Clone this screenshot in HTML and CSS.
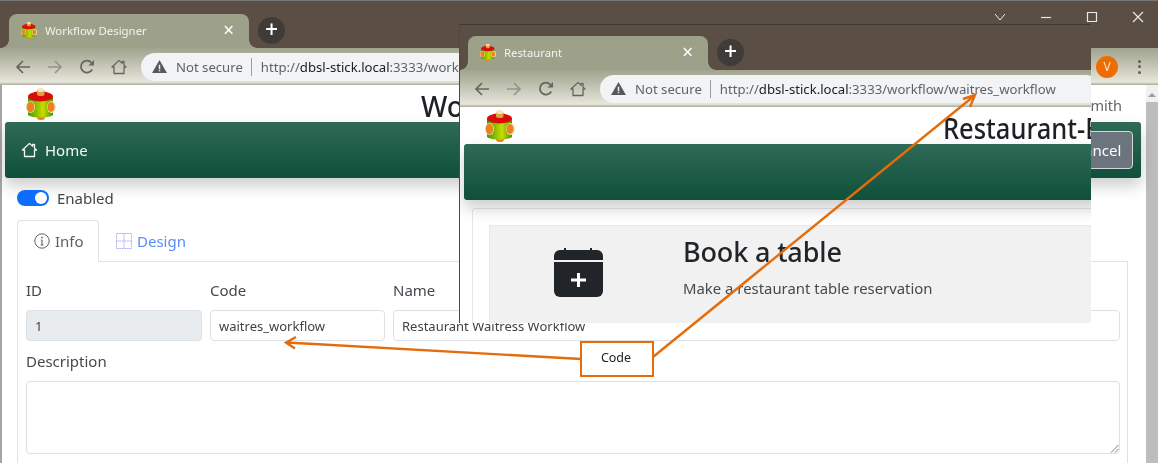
FILE: index.html
```html
<!DOCTYPE html>
<html lang="en">
<head>
<meta charset="utf-8">
<title>Workflow Designer</title>
<link rel="stylesheet" href="styles.css">
</head>
<body>
<svg class="defs" width="0" height="0" aria-hidden="true">
  <defs>
    <linearGradient id="bodyGrad" x1="0" x2="1" y1="0" y2="0">
      <stop offset="0" stop-color="#3f9a00"/><stop offset=".6" stop-color="#c8dc00"/><stop offset="1" stop-color="#4a9400"/>
    </linearGradient>
    <symbol id="logo" viewBox="0 0 30 32">
      <ellipse cx="15" cy="29.500" rx="4" ry="2.500" fill="#e8841c"/>
      <path d="M2 9h25v18c-4 3.500-21 3.500-25 0z" fill="url(#bodyGrad)"/>
      <ellipse cx="4.500" cy="19" rx="4.500" ry="6" fill="#f3e4b8"/>
      <ellipse cx="4.500" cy="19" rx="3.800" ry="5.400" fill="#e8841c"/>
      <ellipse cx="25.500" cy="19" rx="4.500" ry="6" fill="#f3e4b8"/>
      <ellipse cx="25" cy="19" rx="3.500" ry="5" fill="#e8841c"/>
      <ellipse cx="14.500" cy="8.500" rx="12.500" ry="5" fill="#d80c08"/>
      <rect x="11" y="1" width="7.500" height="7" rx="2.500" fill="#e0a040"/>
      <ellipse cx="14.700" cy="2" rx="3.500" ry="2" fill="#f3e4b8"/>
    </symbol>
    <symbol id="house" viewBox="0 0 16 16">
      <path d="M8 1.400 1 8h2v6.500h10V8h2l-2-1.900V2.400h-1.800v2z" fill="none" stroke="currentColor" stroke-width="1.300" stroke-linejoin="round"/>
    </symbol>
    <symbol id="back" viewBox="0 0 16 16">
      <path d="M15 8H2M8 2 2 8l6 6" fill="none" stroke="currentColor" stroke-width="1.700"/>
    </symbol>
    <symbol id="forward" viewBox="0 0 16 16">
      <path d="M1 8h13M8 2l6 6-6 6" fill="none" stroke="currentColor" stroke-width="1.700"/>
    </symbol>
    <symbol id="reload" viewBox="0 0 16 16">
      <path d="M13.200 10.500A6 6 0 1 1 12.400 3.600" fill="none" stroke="currentColor" stroke-width="1.800"/>
      <path d="M9.500 6.500h5.500V1z" fill="currentColor"/>
    </symbol>
    <symbol id="warn" viewBox="0 0 16 14">
      <path d="M8 0 16 14H0z" fill="currentColor"/>
      <path d="M7.200 5h1.600v4.600H7.200zM7.200 10.600h1.600v1.600H7.200z" fill="#f1f3f4"/>
    </symbol>
  </defs>
</svg>

<main class="window window-back">
  <div class="tabstrip">
    <div class="tab">
      <svg class="favicon"><use href="#logo"/></svg>
      <span class="tab-title">Workflow Designer</span>
      <span class="tab-close">×</span>
    </div>
    <span class="newtab">+</span>
    <div class="winctl">
      <svg class="ctl" viewBox="0 0 12 12"><path d="M1 3l5 6 5-6" fill="none" stroke="currentColor"/></svg>
      <svg class="ctl" viewBox="0 0 12 12"><path d="M1 6.500h10" fill="none" stroke="currentColor" stroke-width="1.200"/></svg>
      <svg class="ctl" viewBox="0 0 12 12"><path d="M1.500 1.500h9v9h-9z" fill="none" stroke="currentColor" stroke-width="1.200"/></svg>
      <svg class="ctl" viewBox="0 0 12 12"><path d="M1 1l10 10M11 1 1 11" fill="none" stroke="currentColor" stroke-width="1.200"/></svg>
    </div>
  </div>
  <div class="toolbar">
    <svg class="nav"><use href="#back"/></svg>
    <svg class="nav nav-off"><use href="#forward"/></svg>
    <svg class="nav"><use href="#reload"/></svg>
    <svg class="nav"><use href="#house"/></svg>
    <div class="omnibox">
      <svg class="warn"><use href="#warn"/></svg>
      <span class="insecure">Not secure</span>
      <span class="url">http://<b>dbsl-stick.local</b>:3333/workflow/1</span>
    </div>
    <span class="avatar">V</span>
    <span class="kebab"><i></i><i></i><i></i></span>
  </div>
  <div class="page">
    <div class="page-main">
      <header class="brand">
        <svg class="logo"><use href="#logo"/></svg>
        <h1 class="brand-title">Workflow Designer</h1>
        <span class="user">John Smith</span>
      </header>
      <nav class="navbar">
        <a class="nav-home"><svg class="home-icon"><use href="#house"/></svg>Home</a>
        <span class="cancel">Cancel</span>
      </nav>
      <label class="switch-row"><span class="switch"></span>Enabled</label>
      <div class="tabs">
        <span class="tabitem active">
          <svg class="tabicon" viewBox="0 0 16 16"><circle cx="8" cy="8" r="7.200" fill="none" stroke="currentColor"/><path d="M8 7v5M6.600 12h2.800M6.800 7H8" fill="none" stroke="currentColor" stroke-width="1.100"/><circle cx="8" cy="4.600" r=".9" fill="currentColor"/></svg>Info
        </span>
        <span class="tabitem link">
          <svg class="tabicon" viewBox="0 0 16 16"><path d="M.5.5h15v15H.5zM8 .5v15M.5 8h15" fill="none" stroke="#aeb0f6" stroke-dasharray="2 .7"/></svg>Design
        </span>
      </div>
      <section class="panel">
        <div class="row">
          <div class="field f-id"><label>ID</label><div class="input disabled">1</div></div>
          <div class="field f-code"><label>Code</label><div class="input">waitres_workflow</div></div>
          <div class="field f-name"><label>Name</label><div class="input">Restaurant Waitress Workflow</div></div>
        </div>
        <div class="field">
          <label>Description</label>
          <div class="textarea">
            <svg class="grip" viewBox="0 0 10 10"><path d="M9.500 2 2 9.500M9.500 6 6 9.500" stroke="#777" fill="none"/></svg>
          </div>
        </div>
      </section>
    </div>
    <div class="scrollbar"><i></i><b></b></div>
  </div>
</main>

<section class="window window-front">
  <div class="tabstrip tabstrip-front">
    <div class="tab">
      <svg class="favicon"><use href="#logo"/></svg>
      <span class="tab-title tab-title-small">Restaurant</span>
      <span class="tab-close">×</span>
    </div>
    <span class="newtab">+</span>
  </div>
  <div class="toolbar toolbar-front">
    <svg class="nav"><use href="#back"/></svg>
    <svg class="nav nav-off"><use href="#forward"/></svg>
    <svg class="nav"><use href="#reload"/></svg>
    <svg class="nav"><use href="#house"/></svg>
    <div class="omnibox omnibox-front">
      <svg class="warn"><use href="#warn"/></svg>
      <span class="insecure">Not secure</span>
      <span class="url">http://<b>dbsl-stick.local</b>:3333/workflow/waitres_workflow</span>
    </div>
  </div>
  <div class="page-front">
    <header class="brand brand-front">
      <svg class="logo"><use href="#logo"/></svg>
      <h1 class="brand-title brand-title-front">Restaurant-Booking</h1>
    </header>
    <div class="navbar navbar-front"></div>
    <div class="card">
      <div class="hero">
        <svg class="calendar" viewBox="0 0 49 49">
          <path d="M10 0h2v2h24V0h2v2h5a6 6 0 0 1 6 6v4H0V8a6 6 0 0 1 6-6h4z" fill="#212529"/>
          <path d="M0 14h49v29a6 6 0 0 1-6 6H6a6 6 0 0 1-6-6z" fill="#212529"/>
          <path d="M24.500 25v14M17 32h15" stroke="#fff" stroke-width="3"/>
        </svg>
        <div class="hero-text">
          <h2>Book a table</h2>
          <p>Make a restaurant table reservation</p>
        </div>
      </div>
    </div>
  </div>
</section>

<svg class="arrows" viewBox="0 0 1158 463" width="1158" height="463" aria-hidden="true">
  <path d="M581 359 287 342.500M296 337 286 342.500l9 6" fill="none" stroke="#e46c0a" stroke-width="2.400"/>
  <path d="M653 357 974 96M963 99 975 95l-5 12" fill="none" stroke="#e46c0a" stroke-width="2.400"/>
</svg>
<div class="callout">Code</div>
</body>
</html>
```
FILE: styles.css
```css
* { box-sizing: border-box; }
html, body { margin: 0; padding: 0; }
body {
  width: 1158px; height: 463px; overflow: hidden; position: relative;
  background: #fff; color: #212529;
  font-family: "Noto Sans", "Open Sans", sans-serif; font-size: 15px;
  filter: blur(.45px);
}
.defs { position: absolute; }
.window { position: absolute; overflow: hidden; background: #fff; display: flex; flex-direction: column; }
.window-back { left: 0; top: 0; width: 1158px; height: 463px; border-top: 1px solid #777; }
.window-front { left: 459px; top: 24px; width: 632px; height: 299px; border-left: 1px solid #4a4a4a; border-top: 1px solid #3e3a36; }

.tabstrip { height: 47px; flex: none; background: #5a4e45; display: flex; align-items: flex-end; padding-left: 9px; position: relative; }
.tabstrip-front { height: 45px; padding-left: 8px; }
.tab { width: 240px; height: 34px; background: #9ea18a; border-radius: 8px 8px 0 0; display: flex; align-items: center; padding: 0 15px 2px 12px; color: #fff; position: relative; }
.tab::before, .tab::after { content: ""; position: absolute; bottom: 0; width: 8px; height: 8px; }
.tab::before { left: -8px; background: radial-gradient(circle at 0 0, transparent 7.5px, #9ea18a 8px); }
.tab::after { right: -8px; background: radial-gradient(circle at 100% 0, transparent 7.5px, #9ea18a 8px); }
.favicon { width: 16px; height: 17px; flex: none; margin-right: 8px; }
.tab-title { font-size: 11.400px; flex: 1; color: #f3f3ee; white-space: nowrap; }
.tab-title-small { font-size: 11.300px; }
.tab-close { font-size: 19px; line-height: 1; color: #fff; }
.newtab { width: 27px; height: 27px; margin: 0 0 4px 9px; border-radius: 50%; background: #3f3b38; color: #fff; font-size: 23px; line-height: 25px; text-align: center; font-weight: 500; }
.winctl { margin-left: auto; align-self: flex-start; display: flex; gap: 34px; padding: 10px 14px 0 0; color: #eceae6; }
.ctl { width: 12px; height: 12px; }

.toolbar { height: 37px; flex: none; display: flex; align-items: center; gap: 16px; padding: 0 0 0 15px; background: linear-gradient(#a0a38d, #d5d6c8 70%, #e6e6dc 92%, #aaa99a); color: #66665f; }
.toolbar-front { padding-left: 14px; gap: 16px; }
.nav { width: 16px; height: 16px; flex: none; }
.nav-off { color: #94958a; }
.omnibox { margin-left: -2px; height: 28px; width: 940px; flex: none; background: #f1f3f4; border-radius: 14px; display: flex; align-items: center; padding-left: 11px; font-size: 13.150px; color: #5f6368; white-space: nowrap; overflow: hidden; }
.omnibox-front { width: 500px; margin-left: -2px; }
.warn { width: 15px; height: 13px; color: #55585c; flex: none; margin-right: 9px; }
.insecure { padding-right: 8px; margin-right: 9px; border-right: 1px solid #9a9ca0; line-height: 18px; }
.url b { font-weight: 400; color: #202124; }
.avatar { width: 22px; height: 22px; flex: none; margin-left: -1px; border-radius: 50%; background: #ef6c00; color: #f8e6d4; font-size: 12px; line-height: 22px; text-align: center; }
.kebab { display: flex; flex-direction: column; gap: 2.500px; margin-left: 4px; }
.kebab i { width: 3px; height: 3px; border-radius: 50%; background: #5f6058; }

.page { flex: 1; min-height: 0; display: flex; border-left: 2px solid #a5a5a5; }
.page-main { flex: 1; min-width: 0; padding-left: 3px; }
.scrollbar { width: 12px; flex: none; margin-left: 5px; background: #f1f1f1; display: flex; flex-direction: column; align-items: center; }
.scrollbar i { width: 0; height: 0; margin: 8px 0 5px; border: 4px solid transparent; border-top: 0; border-bottom: 4px solid #9c9c9c; }
.scrollbar b { width: 100%; flex: 1; background: #bdbdbd; }

.brand { height: 37px; display: flex; align-items: center; padding-left: 21px; }
.logo { width: 30px; height: 32px; flex: none; }
.brand-title { margin: 5px 0 0 365px; font-size: 28px; font-weight: 500; white-space: nowrap; color: #1d2125; line-height: 36px; }
.user { margin-left: auto; margin-right: 19px; font-size: 14.500px; color: #666; padding-top: 2px; }
.navbar { height: 56px; width: 1136px; border-radius: 3px; background: linear-gradient(#2f6a57, #0f5039); box-shadow: 0 8px 16px rgba(0,0,0,.2); display: flex; align-items: center; justify-content: space-between; padding: 0 8px 0 16px; color: #fff; position: relative; }
.nav-home { display: flex; align-items: center; gap: 7px; font-size: 15px; color: #f4f7f5; }
.home-icon { width: 17px; height: 16px; }
.cancel { height: 38px; width: 70px; border: 1px solid #d5d8da; border-radius: 4px; background: #6c757d; text-align: center; line-height: 36px; font-size: 15px; color: #fff; }

.switch-row { display: flex; align-items: center; gap: 8px; margin: 10px 0 0 12px; height: 19px; font-size: 15px; color: #43474b; }
.switch { width: 32px; height: 16px; border-radius: 8px; background: #0d6efd; position: relative; flex: none; }
.switch::after { content: ""; position: absolute; right: 2px; top: 2px; width: 12px; height: 12px; border-radius: 50%; background: #fff; }

.tabs { display: flex; margin: 13px 0 0 12px; width: 1111px; height: 42px; border-bottom: 1px solid #dee2e6; position: relative; }
.tabitem { display: flex; align-items: center; gap: 5px; height: 42px; padding: 0 16px; font-size: 15px; color: #5c6166; }
.tabitem.active { width: 82px; background: #fff; border: 1px solid #dee2e6; border-bottom-color: #fff; border-radius: 4px 4px 0 0; }
.tabitem.link { color: #5a8cf5; padding-left: 17px; }
.tabicon { width: 16px; height: 16px; flex: none; }

.panel { width: 1111px; height: 230px; margin-left: 12px; border: 1px solid #dee2e6; border-top: 0; padding: 17px 7px 0 8px; }
.row { display: grid; grid-template-columns: 176px 175px 1fr; gap: 8px; }
.field label { display: block; font-size: 15px; line-height: 22px; color: #44494e; margin-bottom: 9px; }
.input { height: 31px; border: 1px solid #dde1e6; border-radius: 4px; padding: 0 8px; line-height: 30px; font-size: 13px; color: #3e4347; }
.input.disabled { background: #e9ecef; }
.textarea { height: 73px; border: 1px solid #dde1e6; border-radius: 4px; position: relative; }
.row + .field { margin-top: 9px; }
.grip { position: absolute; right: 0; bottom: 0; width: 10px; height: 10px; }

.page-front { flex: 1; background: #fff; min-height: 0; }
.brand-front { height: 37px; padding-left: 25px; overflow: hidden; }
.brand-title-front { margin-left: 428px; transform: scaleX(.91); transform-origin: left center; }
.navbar-front { width: 640px; margin-left: 4px; }
.card { margin: 8px 0 0 12px; width: 640px; height: 150px; background: #fff; border: 1px solid #e6e6e6; border-radius: 3px 0 0 0; padding: 16px 0 0 16px; }
.hero { height: 120px; background: #f1f1f1; border: 1px solid #e8e9ee; display: flex; position: relative; }
.calendar { width: 49px; height: 49px; margin: 22px 0 0 64px; flex: none; }
.hero-text { margin-left: 80px; padding-top: 8px; }
.hero-text h2 { margin: 0; font-size: 27px; font-weight: 500; line-height: 36px; color: #212529; white-space: nowrap; letter-spacing: -.15px; }
.hero-text p { margin: 7px 0 0; font-size: 14.900px; line-height: 22px; color: #444a50; white-space: nowrap; }

.arrows { position: absolute; left: 0; top: 0; pointer-events: none; }
.callout { position: absolute; left: 580px; top: 341px; width: 74px; height: 36px; background: #fff; border: 2px solid #e46c0a; text-align: center; line-height: 30px; padding-right: 2px; font-size: 12.500px; color: #222; }
```
